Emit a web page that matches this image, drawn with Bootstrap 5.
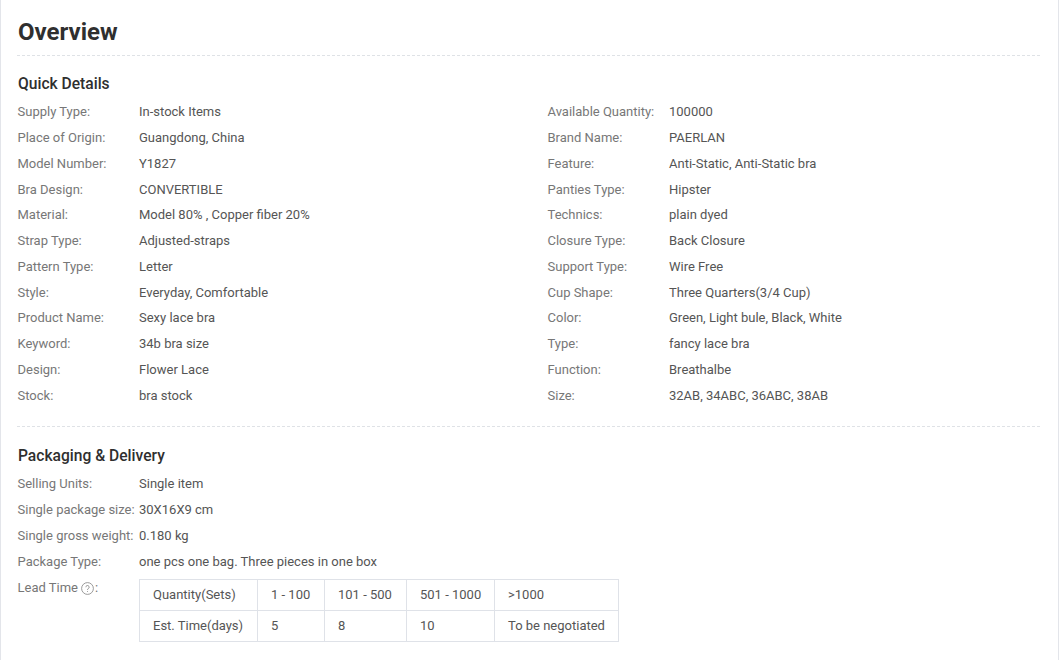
<!DOCTYPE html>
<html lang="en">
<head>
<meta charset="utf-8">
<title>Overview</title>
<link href="https://cdn.jsdelivr.net/npm/bootstrap@5.3.0/dist/css/bootstrap.min.css" rel="stylesheet">
<style>
html,body{height:100%;overflow:hidden;background:#fff}
body{font-family:Roboto,"Liberation Sans",sans-serif;font-size:13px;color:#555}
.pane{height:660px;border-left:1px solid #e3e5ea;border-right:1px solid #e3e5ea;padding:0 18px 0 16px}
.ov-title{font-size:24px;font-weight:700;color:#2f2f2f;line-height:28px;margin:0;padding:18px 0 9px 1px;border-bottom:1px dashed #dfe2e6}
.sec-title{font-size:15.6px;font-weight:500;color:#2f2f2f;line-height:20px;margin:0;padding:18px 0 5.5px 1px}
.sec-next{padding-top:19px}
.spec-grid{display:grid;grid-template-columns:530px 1fr;grid-auto-rows:25.75px;padding-bottom:17.5px;border-bottom:1px dashed #dfe2e6}
.spec-list{display:grid;grid-auto-rows:25.75px}
.spec-row{display:flex;align-items:center;line-height:20px}
.spec-key{width:122px;flex:none;color:#777;white-space:nowrap;padding-left:.5px}
.spec-val{color:#555;white-space:nowrap}
.lead-row{display:flex;margin-top:4.5px}
.lead-key{width:122px;flex:none;color:#777;line-height:20px;display:flex;align-items:center;height:18px;padding-left:.5px}
.hint{display:inline-block;width:13px;height:13px;flex:none;margin:0 1px 0 3px}
.lead-table{border-collapse:collapse;table-layout:fixed;width:479px;color:#555}
.lead-table td{border:1px solid #dfe2e8;height:31px;padding:0 13px;line-height:20px;white-space:nowrap}
</style>
</head>
<body>
<div class="pane">
  <h2 class="ov-title">Overview</h2>
  <h3 class="sec-title">Quick Details</h3>
  <div class="spec-grid">
    <div class="spec-row"><span class="spec-key">Supply Type:</span><span class="spec-val">In-stock Items</span></div>
    <div class="spec-row"><span class="spec-key">Available Quantity:</span><span class="spec-val">100000</span></div>
    <div class="spec-row"><span class="spec-key">Place of Origin:</span><span class="spec-val">Guangdong, China</span></div>
    <div class="spec-row"><span class="spec-key">Brand Name:</span><span class="spec-val">PAERLAN</span></div>
    <div class="spec-row"><span class="spec-key">Model Number:</span><span class="spec-val">Y1827</span></div>
    <div class="spec-row"><span class="spec-key">Feature:</span><span class="spec-val">Anti-Static, Anti-Static bra</span></div>
    <div class="spec-row"><span class="spec-key">Bra Design:</span><span class="spec-val">CONVERTIBLE</span></div>
    <div class="spec-row"><span class="spec-key">Panties Type:</span><span class="spec-val">Hipster</span></div>
    <div class="spec-row"><span class="spec-key">Material:</span><span class="spec-val">Model 80% , Copper fiber 20%</span></div>
    <div class="spec-row"><span class="spec-key">Technics:</span><span class="spec-val">plain dyed</span></div>
    <div class="spec-row"><span class="spec-key">Strap Type:</span><span class="spec-val">Adjusted-straps</span></div>
    <div class="spec-row"><span class="spec-key">Closure Type:</span><span class="spec-val">Back Closure</span></div>
    <div class="spec-row"><span class="spec-key">Pattern Type:</span><span class="spec-val">Letter</span></div>
    <div class="spec-row"><span class="spec-key">Support Type:</span><span class="spec-val">Wire Free</span></div>
    <div class="spec-row"><span class="spec-key">Style:</span><span class="spec-val">Everyday, Comfortable</span></div>
    <div class="spec-row"><span class="spec-key">Cup Shape:</span><span class="spec-val">Three Quarters(3/4 Cup)</span></div>
    <div class="spec-row"><span class="spec-key">Product Name:</span><span class="spec-val">Sexy lace bra</span></div>
    <div class="spec-row"><span class="spec-key">Color:</span><span class="spec-val">Green, Light bule, Black, White</span></div>
    <div class="spec-row"><span class="spec-key">Keyword:</span><span class="spec-val">34b bra size</span></div>
    <div class="spec-row"><span class="spec-key">Type:</span><span class="spec-val">fancy lace bra</span></div>
    <div class="spec-row"><span class="spec-key">Design:</span><span class="spec-val">Flower Lace</span></div>
    <div class="spec-row"><span class="spec-key">Function:</span><span class="spec-val">Breathalbe</span></div>
    <div class="spec-row"><span class="spec-key">Stock:</span><span class="spec-val">bra stock</span></div>
    <div class="spec-row"><span class="spec-key">Size:</span><span class="spec-val">32AB, 34ABC, 36ABC, 38AB</span></div>
  </div>
  <h3 class="sec-title sec-next">Packaging &amp; Delivery</h3>
  <div class="spec-list">
    <div class="spec-row"><span class="spec-key">Selling Units:</span><span class="spec-val">Single item</span></div>
    <div class="spec-row"><span class="spec-key">Single package size:</span><span class="spec-val">30X16X9 cm</span></div>
    <div class="spec-row"><span class="spec-key">Single gross weight:</span><span class="spec-val">0.180 kg</span></div>
    <div class="spec-row"><span class="spec-key">Package Type:</span><span class="spec-val">one pcs one bag. Three pieces in one box</span></div>
  </div>
  <div class="lead-row">
    <div class="lead-key"><span>Lead Time</span><svg class="hint" viewBox="0 0 15 15" fill="none" stroke="#8a8a8a"><circle cx="7.5" cy="7.5" r="6.8"/><path d="M5.6 6a1.9 1.9 0 1 1 2.9 1.6c-.7.4-1 .8-1 1.5" stroke-width="1.1"/><circle cx="7.5" cy="11" r=".6" fill="#8a8a8a" stroke="none"/></svg><span>:</span></div>
    <table class="lead-table">
      <colgroup><col style="width:118px"><col style="width:67px"><col style="width:82px"><col style="width:88px"><col style="width:124px"></colgroup>
      <tr><td>Quantity(Sets)</td><td>1 - 100</td><td>101 - 500</td><td>501 - 1000</td><td>&gt;1000</td></tr>
      <tr><td>Est. Time(days)</td><td>5</td><td>8</td><td>10</td><td>To be negotiated</td></tr>
    </table>
  </div>
</div>
<script src="https://cdn.jsdelivr.net/npm/bootstrap@5.3.0/dist/js/bootstrap.bundle.min.js"></script>
</body>
</html>
